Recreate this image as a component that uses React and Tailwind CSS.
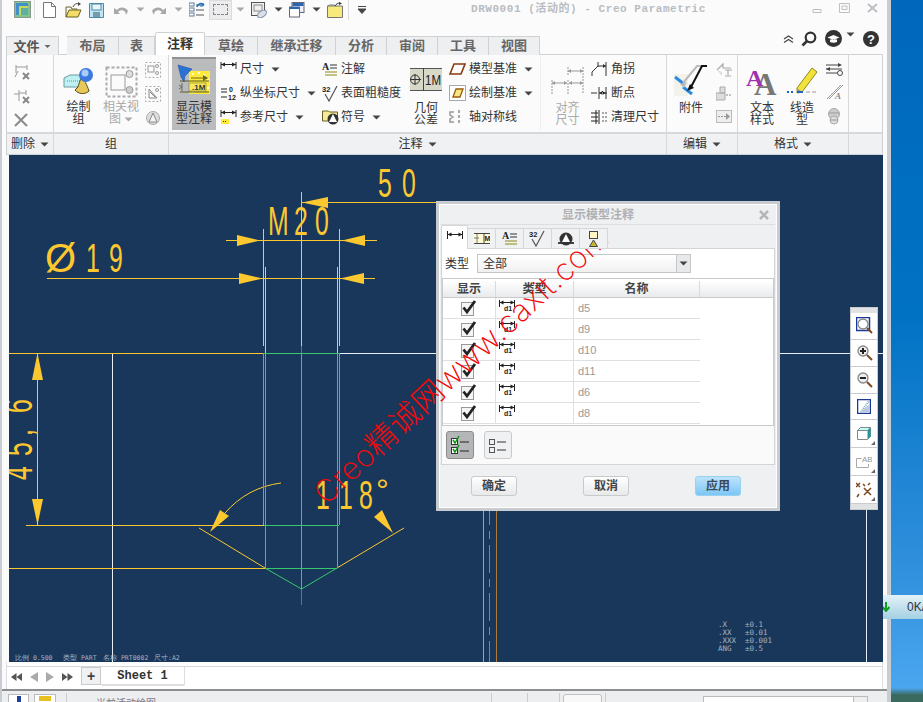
import React from "react";

const Caret = ({ c = "#444", cls = "ml-[7px]" }) => (
  <svg width="9" height="5" viewBox="0 0 9 5" className={cls + " shrink-0"}><path d="M0.5 0.5h8L4.5 4.5z" fill={c} /></svg>
);

const S = ({ w = 16, h = 16, vb, children, cls = "" }) => (
  <svg width={w} height={h} viewBox={vb || `0 0 ${w} ${h}`} className={"shrink-0 " + cls} fill="none">{children}</svg>
);

/* quick access */
const AppIco = () => (<S w={17} h={17}><rect x=".5" y=".5" width="16" height="16" fill="#7fc48a" stroke="#8a9a90" /><rect x="2" y="2" width="12" height="12" fill="#3f8fc8" /><rect x="5" y="5" width="9" height="9" fill="#c7d85a" /><rect x="7" y="7" width="7" height="7" fill="#5fb0a0" /></S>);
const NewIco = () => (<S w={13} h={16}><path d="M.5.5h8l4 4v11H.5z" fill="#fff" stroke="#777" /><path d="M8.5.5v4h4" stroke="#777" /></S>);
const OpenIco = () => (<S w={17} h={16}><path d="M1 5V15h12l3-7H4l-3 7" fill="#f2dc6a" stroke="#6b6020" /><path d="M1 5h5l1 2h5v1" stroke="#6b6020" /><path d="M8 5c1-3 4-4 6-3" stroke="#444" /><path d="M13 0l3 2-3 2z" fill="#444" /></S>);
const SaveIco = () => (<S w={15} h={16}><path d="M.5 1.5h14v14H.5z" fill="#bfe4f4" stroke="#4a8aa8" /><rect x="3" y="2" width="9" height="6" fill="#eaf6fb" stroke="#4a8aa8" /><rect x="4" y="10" width="7" height="5" fill="#7a9aaa" /></S>);
const Undo = ({ flip }) => (<S w={16} h={12} cls={flip ? "-scale-x-100" : ""}><path d="M4 6c3-4 9-3 11 1l-2 4c0-5-5-6-8-3l2 2H1V4z" fill="#a8a8a8" /></S>);
const RegenIco = () => (<S w={16} h={16}><rect x="0" y="1" width="5" height="3" fill="#fff" stroke="#5a7a9a" /><rect x="0" y="6" width="5" height="3" fill="#fff" stroke="#5a7a9a" /><rect x="0" y="11" width="5" height="3" fill="#fff" stroke="#5a7a9a" /><path d="M7 3h8M7 8h8M7 13h8" stroke="#555" /><path d="M8 5a4 4 0 0 1 7-2" stroke="#1a6fc0" strokeWidth="1.6" /><path d="M14 1v3h-3" stroke="#1a6fc0" /></S>);
const ViewIco = () => (<S w={16} h={16}><rect x=".5" y=".5" width="13" height="13" fill="#f0f0f0" stroke="#555" /><rect x="3" y="3" width="8" height="6" stroke="#888" /><ellipse cx="11" cy="12" rx="5" ry="3" fill="#d8e0ea" stroke="#8090a8" transform="rotate(-35 11 12)" /></S>);
const WinIco = () => (<S w={16} h={16}><rect x="3" y=".5" width="12" height="10" fill="#eef" stroke="#667" /><rect x=".5" y="5" width="10" height="10" fill="#fff" stroke="#667" /><rect x="3.5" y="1" width="11" height="3" fill="#2a66b0" /><rect x="1" y="5" width="9" height="2" fill="#2a66b0" /></S>);
const FolderIco = () => (<S w={16} h={16}><path d="M.5 4h15v11.5H.5z" fill="#f6ea7a" stroke="#777" /><path d="M.5 4l2-1h5l1 1" stroke="#777" /><path d="M8 4c1-2 3-3 5-3" stroke="#333" /><path d="M12 0l3 1.500-3 1.500z" fill="#333" /></S>);

/* ribbon small icons */
const Gray = "#9a9a9a";
const DelA = () => (<S w={17} h={17}><path d="M2 1v8M13 1v5M2 3h11" stroke={Gray} /><path d="M1 13l3-6" stroke={Gray} /><path d="M9 9l6 6M15 9l-6 6" stroke="#888" strokeWidth="2" /></S>);
const DelB = () => (<S w={17} h={17}><path d="M0 6h5M5 2v11M12 2v5M5 5h7" stroke={Gray} /><path d="M9 9l6 6M15 9l-6 6" stroke="#888" strokeWidth="2" /></S>);
const DelC = () => (<S w={14} h={14}><path d="M1 1l12 12M13 1L1 13" stroke="#8a8a8a" strokeWidth="2" /></S>);
const DrawGroup = () => (
  <S w={32} h={30}>
    <path d="M1 11l6-3h12v12H7l-6 0z" fill="#bff0f4" stroke="#6a9aa0" />
    <path d="M4 14h14" stroke="#2aa" strokeDasharray="1 1" />
    <path d="M15 20c2-7 3-9 4-10 2 2 5 8 7 14-4 4-11 3-14-1z" fill="#e8c85a" stroke="#5a4a10" />
    <circle cx="23" cy="8" r="7" fill="#3a7ae0" />
    <circle cx="22" cy="6" r="3.500" fill="#a8ccf8" />
  </S>
);
const DashBox = () => (
  <S w={33} h={32}>
    <rect x="1.500" y="1.500" width="30" height="29" stroke="#aaa" strokeWidth="2" strokeDasharray="3 2" />
    <rect x="6" y="9" width="14" height="15" stroke={Gray} />
    <circle cx="24.500" cy="8" r="3.500" stroke={Gray} fill="#ddd" />
    <circle cx="24.500" cy="24" r="3.500" stroke={Gray} fill="#ccc" />
  </S>
);
const MiniA = () => (<S w={16} h={16}><rect x=".5" y=".5" width="15" height="15" stroke="#aaa" strokeDasharray="2 2" /><rect x="3" y="4" width="6" height="6" stroke={Gray} /><circle cx="12" cy="4" r="1.500" stroke={Gray} /><circle cx="12" cy="11" r="1.500" stroke={Gray} /></S>);
const MiniB = () => (<S w={16} h={16}><rect x=".5" y=".5" width="15" height="15" stroke="#aaa" strokeDasharray="2 2" /><path d="M4 3v9h8zM5 6l5 5" stroke="#888" /><circle cx="12" cy="4" r="1.500" stroke={Gray} /></S>);
const MiniC = () => (<S w={16} h={16}><circle cx="8" cy="8" r="6.500" fill="#ddd" stroke="#aaa" /><path d="M8 3l4 9H4z" fill="#f4f4f4" stroke="#888" /></S>);

const ShowIco = () => (
  <S w={34} h={32}>
    <rect x="12" y="7" width="21" height="23" fill="#ffe93a" />
    <path d="M15 10h2M21 9h2M26 11h2M30 16h2M30 24h2M15 28h2M24 27h2" stroke="#fff" strokeWidth="1.500" />
    <path d="M3 17h29M3 28h29" stroke="#5a5a20" />
    <path d="M14 14h16" stroke="#6a6a20" /><path d="M31 14l-5-3v6z" fill="#6a6a20" />
    <path d="M1 1l14 4-7 7-1 6-3-5z" fill="#2a72d8" stroke="#1a4a90" strokeWidth=".5" />
    <rect x="12" y="19" width="17" height="8" fill="#f6e860" stroke="#6a6a20" strokeWidth=".5" />
    <text x="15" y="26" fontSize="8" fontWeight="700" fill="#333" fontFamily="Liberation Sans">.1M</text>
    <path d="M5 19v8M2 21l3 2-3 2" stroke="#666" />
  </S>
);
const DimIco = ({ extra }) => (
  <S w={17} h={16}>
    <path d="M1 1v7M16 1v7" stroke="#222" />
    <path d="M1 3.500h15" stroke="#222" />
    <path d="M1 3.500l4-2v4zM16 3.500l-4-2v4z" fill="#222" />
    {extra && <><rect x="1" y="10" width="8" height="5" fill="#ffe93a" /><path d="M3 12.500h4" stroke="#333" strokeDasharray="1 1" /></>}
  </S>
);
const OrdIco = () => (
  <S w={17} h={14}>
    <path d="M1 3h6M1 6h6" stroke="#222" />
    <text x="9" y="6" fontSize="7" fontWeight="700" fill="#222" fontFamily="Liberation Sans">0</text>
    <text x="8" y="14" fontSize="7" fontWeight="700" fill="#222" fontFamily="Liberation Sans">12</text>
    <path d="M1 11h6" stroke="#222" />
  </S>
);
const NoteIco = () => (
  <S w={16} h={15}>
    <text x="0" y="8" fontSize="10" fontWeight="700" fill="#222" fontFamily="Liberation Serif">A</text>
    <path d="M8 3h7M8 6h7" stroke="#333" /><path d="M3 10h12M3 13h12" stroke="#8a8a10" />
  </S>
);
const RoughIco = () => (
  <S w={17} h={17}>
    <text x="0" y="7" fontSize="7.500" fontWeight="700" fill="#222" fontFamily="Liberation Sans">32</text>
    <path d="M3 9l4 7L15 1" stroke="#555" strokeWidth="1.200" />
  </S>
);
const SymIco = () => (
  <S w={19} h={16}>
    <path d="M.5 2h6l1 1h8v9H.5z" fill="#f5ec9a" stroke="#6a6020" />
    <circle cx="11" cy="10" r="5.500" fill="#333" />
    <path d="M11 5l4 8H7z" fill="#fff" />
  </S>
);
const GeoIco = () => (
  <svg width="32" height="23" viewBox="0 0 32 23" className="shrink-0">
    <rect width="32" height="23" fill="#d8d8c8" />
    <path d="M0 .5h32M0 22.500h32" stroke="#555" />
    <path d="M13.500 0v23" stroke="#444" />
    <circle cx="5" cy="11.500" r="4.500" fill="none" stroke="#333" />
    <path d="M0 11.500h11M5 6v11" stroke="#333" />
    <text x="15" y="17" fontSize="15" fill="#222" textLength="16" lengthAdjust="spacingAndGlyphs" fontFamily="Liberation Sans">1M</text>
  </svg>
);
const DatumA = () => (<S w={17} h={12}><path d="M1 11L5 1h11l-4 10z" stroke="#8a3a10" strokeWidth="1.600" /></S>);
const DatumB = () => (<S w={17} h={16}><rect x=".5" y=".5" width="16" height="15" fill="#fff" stroke="#aaa" /><path d="M4 12L7 4h7l-3 8z" fill="#f6e880" stroke="#9a5a10" strokeWidth="1.300" /></S>);
const AxisIco = () => (<S w={17} h={17}><path d="M5 3H1v3l3 2-3 2v3h4" stroke="#999" strokeWidth="1.500" /><path d="M10 1v15" stroke="#555" strokeDasharray="3 2" /></S>);
const AlignIco = () => (
  <S w={34} h={28}>
    <path d="M17 1v8M32 1v26M1 14v14M17 14v14" stroke="#999" strokeDasharray="2 1" />
    <path d="M17 5h15M1 17h15M18 17h14" stroke={Gray} />
    <path d="M17 5l3-2v4zM32 5l-3-2v4zM1 17l3-2v4zM16 17l-3-2v4zM18 17l3-2v4zM32 17l-3-2v4z" fill={Gray} />
  </S>
);
const JogIco = () => (<S w={17} h={16}><path d="M15 1v14M15 5H7L1 11v4M7 1v5" stroke="#333" /><path d="M15 5l-3-2v4z" fill="#333" /></S>);
const BreakIco = () => (<S w={17} h={14}><path d="M0 7h6M8 7h8M8 1v12M15 1v12" stroke="#333" /><path d="M8 7l4-2v4zM15 7l-4-2v4z" fill="#222" /></S>);
const CleanIco = () => (<S w={17} h={14}><path d="M0 3h7M0 7h7M0 11h7M5 0v14M8 0v14" stroke="#222" /><path d="M11 3h6M11 7h6M11 11h6" stroke="#555" strokeDasharray="2 1" /></S>);
const AttachIco = () => (
  <S w={34} h={32}>
    <rect x="0" y="9" width="14" height="22" fill="#f2f2ea" />
    <path d="M1 12l9 7M9 22l9 7" stroke="#2a8ae0" strokeWidth="3" />
    <path d="M32 1H23L9 18" stroke="#bbb" strokeWidth="2" /><path d="M6 19l7-2-3 6z" fill="#bbb" />
    <path d="M33 1h-5L17 22" stroke="#111" strokeWidth="2" /><path d="M13 26l7-3-4-4z" fill="#111" />
  </S>
);
const EditA = () => (<S w={16} h={15}><path d="M1 8l6-6v4h8M9 8h7M12 8v5M9 14h6" stroke="#aaa" strokeWidth="1.200" /><path d="M1 8l5 6V10z" fill="#ddd" /></S>);
const EditB = () => (<S w={16} h={15}><path d="M4 1h5v6h-5zM0 7h9v7H0z" fill="#ddd" stroke="#aaa" /><path d="M10 9h6" stroke="#888" strokeDasharray="2 1" /></S>);
const EditC = () => (<S w={16} h={13}><rect x=".5" y=".5" width="15" height="12" fill="#eee" stroke="#bbb" /><path d="M2 6.500h8" stroke="#999" strokeDasharray="2 1" /><path d="M10 3l4 3.500-4 3.500z" fill="#999" /></S>);
const TextStyle = () => (
  <svg width="32" height="30" viewBox="0 0 32 30" className="shrink-0">
    <text x="8" y="29" fontSize="31" fontWeight="700" fill="#777" fontFamily="Liberation Serif">A</text>
    <text x="0" y="20" fontSize="24" fontWeight="700" fill="#a030b0" fontFamily="Liberation Serif">A</text>
  </svg>
);
const LineStyle = () => (
  <S w={32} h={30}>
    <path d="M11 22L26 2l5 4-15 20-5 1z" fill="#f2e23a" stroke="#8a8a20" />
    <path d="M11 22l5 4-5 1z" fill="#999" />
    <path d="M1 26h2M5 26h2" stroke="#2060c8" strokeWidth="2" /><path d="M11 26h6" stroke="#2060c8" strokeWidth="2" /><path d="M20 26h11" stroke="#bbb" strokeWidth="1.500" strokeDasharray="4 2" />
  </S>
);
const FormA = () => (<S w={17} h={14}><path d="M0 3h14M0 7h16M0 11h11" stroke="#444" /><path d="M16 3l-4-2v4zM0 7l4-2v4z" fill="#444" /><circle cx="14" cy="11" r="2.500" stroke="#444" /></S>);
const FormB = () => (<S w={17} h={16}><path d="M1 15L15 1M3 15L17 1" stroke="#999" /><text x="9" y="15" fontSize="9" fontWeight="700" fontStyle="italic" fill="#888" fontFamily="Liberation Serif">A</text></S>);
const FormC = () => (<S w={16} h={17}><circle cx="8" cy="6" r="5.500" fill="#ccc" stroke="#aaa" /><circle cx="8" cy="12" r="4" fill="#ddd" stroke="#aaa" /><path d="M3 5h10M4 12h8" stroke="#999" /></S>);

const Big = ({ w, icon, text, gray, iconH = 40, cls = "" }) => (
  <div style={{ width: w }} className={"flex flex-col items-center " + cls}>
    <div style={{ height: iconH }} className="flex items-center justify-center w-full">{icon}</div>
    <div className={"text-[12px] leading-[12px] text-center whitespace-nowrap " + (gray ? "text-[#aaa]" : "text-[#333]")}>{text}</div>
  </div>
);

const Row = ({ icon, label, caret, gray, iw = "w-[20px]" }) => (
  <div className="flex items-center h-[24px]">
    <span className={iw + " flex items-center shrink-0"}>{icon}</span>
    <span className={"text-[12px] whitespace-nowrap " + (gray ? "text-[#999]" : "text-[#333]")}>{label}</span>
    {caret && <Caret c="#444" />}
  </div>
);

const Group = ({ w, label, caret, children, cls = "" }) => (
  <div style={{ width: w }} className="flex flex-col border-r border-[#d6d8da] shrink-0">
    <div className={"h-[77px] flex items-start " + cls}>{children}</div>
    <div className="h-[22px] border-t-2 border-[#d6d8da] bg-[#f0f1f3] flex items-center justify-center text-[12px] text-[#333]">
      {label}{caret && <Caret c="#444" cls="ml-[5px]" />}
    </div>
  </div>
);

const tabs = [["布局", 52], ["表", 36], ["注释", 50, true], ["草绘", 53], ["继承迁移", 78], ["分析", 51], ["审阅", 51], ["工具", 51], ["视图", 51]];

const DimD1 = () => (
  <svg width="16" height="12" viewBox="0 0 16 12" className="shrink-0">
    <path d="M.5 0v7M15.500 0v7M.5 2.500h15" stroke="#222" fill="none" />
    <path d="M.5 2.500l4-2v4zM15.500 2.500l-4-2v4z" fill="#222" />
    <text x="5" y="10.500" fontSize="7" fontWeight="700" fill="#222" fontFamily="Liberation Sans">d1</text>
  </svg>
);
const Check = () => (
  <svg width="16" height="16" viewBox="0 0 16 16" className="shrink-0">
    <rect x=".5" y="2.500" width="12" height="13" fill="#f5f5f5" stroke="#999" />
    <path d="M2.500 7.500l3.500 4.500 8-11" fill="none" stroke="#222" strokeWidth="2.800" />
  </svg>
);

const rows = ["d5", "d9", "d10", "d11", "d6", "d8"];

const Dialog = () => (
  <div className="absolute left-[427px] top-[46px] w-[344px] h-[310px] border-[3px] border-[#c8ccd0] bg-[#eff0f2] flex flex-col">
    <div className="border border-white flex-1 flex flex-col min-h-0">
      <div className="h-[20px] relative flex items-center justify-center pr-[20px] text-[12px] font-bold text-[#aeb0b2] border-b border-[#dcdee0] mx-px">
        显示模型注释
        <svg width="10" height="10" viewBox="0 0 10 10" className="absolute right-[6px] top-[5px]"><path d="M1 1l8 8M9 1l-8 8" stroke="#b4b6b8" strokeWidth="2.500" /></svg>
      </div>
      <div className="h-[24px] flex items-end pl-[1px] relative z-10 -mb-px">
        <div className="w-[27px] h-[24px] bg-white border border-b-0 border-[#d4d6d8] rounded-t-[2px] flex justify-center pt-[5px]"><S w={16} h={8}><path d="M.5 0v8M15.500 0v8M.5 3.500h15" stroke="#222" /><path d="M.5 3.500l4-2v4zM15.500 3.500l-4-2v4z" fill="#222" /></S></div>
        {[0, 1, 2, 3, 4].map((i) => (
          <div key={i} className="w-[28px] h-[21px] bg-[#f0f1f3] border-r border-t border-b border-[#d4d6d8] flex items-center justify-center">
            {i === 0 && <S w={16} h={11}><rect x="0" y="1" width="16" height="9" fill="#fffbd8" /><path d="M0 .5h16M0 10.500h16M10 1v9" stroke="#444" /><path d="M3 1v9M0 5h5" stroke="#777" /><text x="10.500" y="8" fontSize="7" fontWeight="700" fill="#222" fontFamily="Liberation Sans">M</text></S>}
            {i === 1 && <NoteIco />}
            {i === 2 && <RoughIco />}
            {i === 3 && <S w={16} h={16}><path d="M0 12h16" stroke="#444" strokeWidth="2" /><circle cx="8" cy="8" r="6.500" fill="#333" /><path d="M8 3l4 8H4z" fill="#fff" /></S>}
            {i === 4 && <S w={9} h={16}><rect x=".5" y=".5" width="8" height="7" fill="#fff7c0" stroke="#444" /><path d="M4.500 9l4 6.500h-8z" fill="#c8b830" stroke="#444" /></S>}
          </div>
        ))}
      </div>
      <div className="mx-px bg-white border border-[#d2d4d6] h-[217px] flex flex-col">
        <div className="h-[29px] flex items-center pl-[3px] gap-[4px] shrink-0">
          <span className="text-[12px] text-[#333] w-[28px]">类型</span>
          <div className="w-[214px] h-[19px] border border-[#c4c6c8] bg-gradient-to-b from-white to-[#f0f0f0] flex items-center justify-between">
            <span className="text-[12px] text-[#333] pl-[5px]">全部</span>
            <div className="w-[14px] h-full border-l border-[#c4c6c8] bg-[#e8e9ea] flex items-center justify-center"><Caret c="#444" cls="" /></div>
          </div>
        </div>
        <div className="h-[148px] border border-[#c8cacc] pt-[2px] flex flex-col shrink-0">
          <div className="h-[17px] flex text-[12px] font-bold text-[#444] bg-gradient-to-b from-white to-[#e9eaec] border-b border-[#c8cacc] shrink-0 leading-[16px]">
            <div className="w-[53px] text-center border-r border-[#d8dadc]">显示</div>
            <div className="w-[78px] text-center border-r border-[#d8dadc]">类型</div>
            <div className="w-[126px] text-center border-r border-[#d8dadc]">名称</div>
            <div className="flex-1" />
          </div>
          {rows.map((r) => (
            <div key={r} className="h-[21px] w-[257px] flex border-b border-[#dddfe0] shrink-0">
              <div className="w-[53px] flex justify-center items-center border-r border-[#dddfe0]"><Check /></div>
              <div className="w-[78px] pl-[3px] pt-[2px] border-r border-[#dddfe0]"><DimD1 /></div>
              <div className="pl-[4px] text-[11px] leading-[20px] text-[#999]">{r}</div>
            </div>
          ))}
        </div>
        <div className="flex-1 bg-[#fafafa] flex items-center pl-[4px] gap-[10px]">
          <div className="w-[28px] h-[28px] rounded-[3px] bg-[#b4b6b8] border border-[#8a8c8e] flex items-center justify-center">
            <S w={18} h={20}><rect x=".5" y="3.500" width="6" height="6" fill="#fff" stroke="#333" /><rect x=".5" y="12.500" width="6" height="6" fill="#fff" stroke="#333" /><path d="M2 5l2 3 4-7M2 14l2 3 4-7" stroke="#0a9a10" strokeWidth="1.500" /><path d="M9 7h9M9 16h9" stroke="#222" /></S>
          </div>
          <div className="w-[28px] h-[28px] rounded-[3px] bg-[#f0f1f2] border border-[#c8cacc] flex items-center justify-center">
            <S w={18} h={15}><rect x=".5" y="1.500" width="5" height="5" stroke="#555" /><rect x=".5" y="9.500" width="5" height="5" stroke="#555" /><path d="M8 4h9M8 12h9" stroke="#333" /></S>
          </div>
        </div>
      </div>
      <div className="flex-1 flex items-center pl-[31px] gap-[66px]">
        <button className="w-[46px] h-[20px] rounded-[3px] border border-[#c8cacc] bg-gradient-to-b from-white to-[#e8e9ea] text-[12px] font-bold text-[#444]">确定</button>
        <button className="w-[46px] h-[20px] rounded-[3px] border border-[#c8cacc] bg-gradient-to-b from-white to-[#e8e9ea] text-[12px] font-bold text-[#444]">取消</button>
        <button className="w-[46px] h-[20px] rounded-[3px] border border-[#9ad0f0] bg-gradient-to-b from-[#bce4fb] to-[#7cc6f6] text-[12px] font-bold text-[#3a4a5a]">应用</button>
      </div>
    </div>
  </div>
);

const Mag = ({ sign, box }) => (
  <S w={17} h={17}>
    {box && <rect x=".5" y=".5" width="13" height="13" fill="#fff" stroke="#1a3a9a" strokeWidth="1.500" />}
    <circle cx="7" cy="7" r="5" fill={sign ? "#eee" : "none"} stroke="#888" strokeWidth="1.300" />
    {sign === "+" && <path d="M4 7h6M7 4v6" stroke="#222" strokeWidth="2" />}
    {sign === "-" && <path d="M4 7h6" stroke="#222" strokeWidth="2" />}
    <path d="M11 11l5 5" stroke="#7a4a20" strokeWidth="2" />
  </S>
);
const toolbarIcons = [
  <Mag box />, <Mag sign="+" />, <Mag sign="-" />,
  <S w={14} h={15}><rect x=".5" y=".5" width="13" height="14" fill="#fff" stroke="#1a3a9a" strokeWidth="1.500" /><path d="M4 13l8-11" stroke="#7ab" strokeWidth="2" strokeDasharray="1 1" /><path d="M3 13L13 5v8z" fill="#bcc8e0" /></S>,
  <S w={14} h={13}><path d="M.5 3.500l3-3h10v9l-3 3H.5z" fill="#fff" stroke="#888" /><path d="M10.500 3.500l3-3v9l-3 3z" fill="#1a9a9a" /><path d="M.5 3.500l3-3h10l-3 3z" fill="#bff" stroke="#888" /></S>,
  <svg width="16" height="13" viewBox="0 0 16 13" className="shrink-0"><path d="M.5 3.500h5M.5 3.500v9h12V9" stroke="#aaa" fill="none" /><text x="6" y="7" fontSize="8" fill="#999" fontFamily="Liberation Sans">AB</text></svg>,
  <S w={16} h={16}><path d="M0 1l4 4M4 1L0 5M7 2l2 2M3 12l-2 3M8 6l7 7M15 6l-7 7M12 3l2-2M1 15l1-1" stroke="#7a4a20" strokeWidth="1.500" /></S>,
];
const Toolbar = () => (
  <div className="absolute left-[841px] top-[152px] w-[28px] h-[203px] border border-[#c8ccd0] bg-[#e0e2e4] flex flex-col py-[5px]">
    {toolbarIcons.map((ic, i) => (
      <div key={i} className={"bg-white border-b border-[#c8ccd0] flex items-center justify-center relative " + (i > 3 ? "h-[28px]" : "h-[27px]")}>
        {ic}
        {i > 3 && <svg width="4" height="4" viewBox="0 0 4 4" className="absolute right-[2px] bottom-[2px]"><path d="M4 0v4H0z" fill="#666" /></svg>}
      </div>
    ))}
  </div>
);

const Y = "#fdc82f";
const G = "#37c76e";
const W = "#e8eef8";
const Arr = ({ p }) => <polygon points={p} fill={Y} />;
const T = ({ x, y, pos, sx = 0.62, size = 40, rot = 0, children }) => (
  <text transform={`translate(${x} ${y}) rotate(${rot}) scale(${sx} 1)`} x={pos.map((a) => a / sx).join(" ")} y="0" fontSize={size} fill={Y} fontFamily="Liberation Sans">{children}</text>
);

const Drawing = () => (
  <svg viewBox="9 155 874 507" width="874" height="507" className="absolute inset-0" shapeRendering="crispEdges">
    {/* white construction lines */}
    <path d="M339 353.500H883M112.500 353V662M866.500 353V662" stroke={W} fill="none" />
    <path d="M483.500 353V662" stroke="#9aa4b0" fill="none" />
    <path d="M489.500 353V662" stroke="#a87a4a" strokeDasharray="28 6 8 6" fill="none" />
    <path d="M496.500 353V662" stroke="#b07a3a" fill="none" />
    {/* yellow */}
    <g stroke={Y} fill="none" strokeWidth="1">
      <path d="M9 353.500H264M26 525.500H264M9 568.500H265" />
      <path d="M226 240.500H377M47 278.500H375M301 202.500H440" />
      <path d="M263.500 229V346M339.500 229V346M265.500 267V353M337.500 267V353M301.500 192V346" />
      <path d="M37.500 353V525" />
    </g>
    <g stroke={Y} fill="none" shapeRendering="auto">
      <path d="M199 528L265 568M337 568L404 528" />
      <path d="M281 483C258 486 240 496 225 513" />
    </g>
    <path d="M301.500 346V353M301.500 589V605" stroke="#8a6a50" fill="none" />
    {/* green */}
    <g stroke={G} fill="none">
      <path d="M264 353.500H339M264 525.500H339M265 568.500H337" />
      <path d="M263.500 353V525M339.500 353V525M265.500 353V568M337.500 353V568M301.500 353V589" />
      <path d="M265 568L301.500 589L337 568" shapeRendering="auto" />
    </g>
    <g shapeRendering="auto">
      <Arr p="237,235 260,240.500 237,246" />
      <Arr p="365,235 342,240.500 365,246" />
      <Arr p="239,273 263,278.500 239,284" />
      <Arr p="364,273 340,278.500 364,284" />
      <Arr p="302,202.500 328,197 328,208" />
      <Arr p="37.500,353 32,380 43,380" />
      <Arr p="37.500,525 32,499 43,499" />
      <Arr p="210,532 220,510 229,516" />
      <Arr p="393,533 374,517 382,510" />
      <T x={378} y={197} pos={[0, 24]}>50</T>
      <T x={268} y={235} pos={[0, 26, 47]}>M20</T>
      <text x="45" y="272" fontSize="40" fill={Y} fontFamily="Liberation Sans">Ø</text>
      <T x={86} y={272} pos={[0, 23]}>19</T>
      <T x={32} y={480} rot={-90} pos={[0, 24, 44, 67]}>45,6</T>
      <T x={316} y={509} pos={[0, 23, 43]}>118</T>
      <text x="376" y="501" fontSize="32" fill={Y} fontFamily="Liberation Sans">°</text>
      <g fontSize="6.500" fill="#a9b3c0" fontFamily="DejaVu Sans Mono">
        <text x="15" y="660">比例 0.500</text>
        <text x="63" y="660">类型 PART</text>
        <text x="103" y="660">名称 PRT0002</text>
        <text x="154" y="660">尺寸:A2</text>
      </g>
      <g fontSize="7.500" fill="#a9b3c0" fontFamily="DejaVu Sans Mono">
        <text x="718" y="627">.X</text><text x="745" y="627">±0.1</text>
        <text x="718" y="635">.XX</text><text x="745" y="635">±0.01</text>
        <text x="718" y="643">.XXX</text><text x="745" y="643">±0.001</text>
        <text x="718" y="651">ANG</text><text x="745" y="651">±0.5</text>
      </g>
    </g>
  </svg>
);

export default function App() {
  return (
    <div className="relative w-[923px] h-[702px] overflow-hidden flex font-['Liberation_Sans','Noto_Sans_CJK_SC',sans-serif] bg-[linear-gradient(180deg,#0068bc_0%,#0072c4_45%,#2f8fdc_80%,#4aa6ef_98%,#3a6a5e_99%)]">
      <div className="w-[891px] h-full shrink-0 flex flex-col bg-[#fbfbfb] border-l-2 border-r-4 border-[#c9cdd2]">
        {/* quick access + title */}
        <div className="h-[31px] shrink-0 relative flex items-start">
          <div className="flex items-center h-[19px] pl-[12px]">
            <AppIco />
            <div className="w-px h-[20px] bg-[#dcdcdc] ml-[3px]" />
            <span className="ml-[8px]"><NewIco /></span>
            <span className="ml-[9px]"><OpenIco /></span>
            <span className="ml-[7px]"><SaveIco /></span>
            <span className="ml-[9px]"><Undo /></span>
            <Caret c="#aaa" cls="ml-[7px]" />
            <span className="ml-[6px]"><Undo flip /></span>
            <Caret c="#aaa" cls="ml-[7px]" />
            <span className="ml-[6px]"><RegenIco /></span>
            <div className="ml-[4px] w-[23px] h-[20px] bg-[#ececee] border border-[#dcdcdc] flex items-center justify-center"><div className="w-[15px] h-[11px] border border-dashed border-[#888]" /></div>
            <Caret c="#aaa" cls="ml-[4px]" />
            <span className="ml-[6px]"><ViewIco /></span>
            <Caret c="#444" cls="ml-[7px]" />
            <span className="ml-[6px]"><WinIco /></span>
            <Caret c="#444" cls="ml-[7px]" />
            <span className="ml-[6px]"><FolderIco /></span>
            <div className="w-px h-[20px] bg-[#dcdcdc] ml-[5px]" />
            <svg width="10" height="8" viewBox="0 0 10 8" className="ml-[8px]"><path d="M1 .5h8M1 3h8L5 7.500z" stroke="#444" fill="#444" strokeWidth="1" /></svg>
          </div>
          <div className="absolute left-[469px] top-[2px] text-[11px] font-bold leading-[14px] tracking-[.55px] text-[#b9bdc2] font-['Liberation_Mono','Noto_Sans_CJK_SC',monospace] whitespace-nowrap">DRW0001 (活动的) - Creo Parametric</div>
          <div className="absolute right-[9px] top-[3px] flex items-center gap-[17px]">
            <svg width="10" height="10" viewBox="0 0 10 10"><path d="M1 6.500h8v3H1z" fill="none" stroke="#bcc0c4" /></svg>
            <svg width="11" height="10" viewBox="0 0 11 10"><path d="M.5.5h10v9H.5zM3 3h5v3.500H3z" fill="none" stroke="#bcc0c4" /></svg>
            <svg width="11" height="10" viewBox="0 0 11 10"><path d="M1 1l9 8M10 1L1 9" stroke="#bcc0c4" strokeWidth="2" /></svg>
          </div>
        </div>
        {/* tabs */}
        <div className="h-[24px] shrink-0 flex items-end pl-[4px] pr-[4px] relative z-10 -mb-px">
          <div className="w-[53px] h-[19px] mr-[8px] flex items-center justify-center bg-[#eeeff1] border border-b-0 border-[#cfd1d3] text-[13px] font-bold text-[#555] leading-none">文件<Caret c="#666" cls="ml-[3px] scale-75" /></div>
          {tabs.map(([t, w, act]) => (
            <div key={t} style={{ width: w }} className={act
              ? "h-[23px] flex items-center justify-center bg-white border border-b-0 border-[#cfd1d3] text-[13px] font-bold text-[#333] rounded-t-[2px]"
              : "h-[19px] flex items-center justify-center bg-[#eeeff1] border-t border-r border-[#cfd1d3] text-[13px] font-bold text-[#666] first:border-l"}>{t}</div>
          ))}
          <div className="absolute right-[8px] top-[-1px] flex items-center">
            <svg width="11" height="8" viewBox="0 0 11 8"><path d="M1 4l4.500-3L10 4M1 7.500l4.500-3L10 7.500" stroke="#444" fill="none" strokeWidth="1.200" /></svg>
            <svg width="16" height="16" viewBox="0 0 16 16" className="ml-[7px]"><circle cx="9.500" cy="6.500" r="4.800" fill="none" stroke="#333" strokeWidth="2.200" /><path d="M6 10l-4.500 4.500" stroke="#333" strokeWidth="2.600" /></svg>
            <svg width="17" height="17" viewBox="0 0 17 17" className="ml-[8px]"><circle cx="8.500" cy="8.500" r="8.500" fill="#333" /><path d="M2.500 7.500l6-2.500 6 2.500-6 2.500zM5 9.500v2.500c2 1 5 1 7 0V9.500" fill="#fff" /></svg>
            <Caret c="#444" cls="ml-[4px] -mt-[8px]" />
            <svg width="16" height="16" viewBox="0 0 16 16" className="ml-[8px]"><circle cx="8" cy="8" r="8" fill="#333" /><text x="8" y="13" textAnchor="middle" fontSize="13" fontWeight="700" fill="#fff" fontFamily="Liberation Sans">?</text></svg>
          </div>
        </div>
        {/* ribbon */}
        <div className="h-[101px] shrink-0 ml-[4px] mr-[4px] bg-[#fbfbfb] border border-[#cfd1d3] flex">
          <Group w={47} label="删除" caret cls="flex-col items-center pl-[7px] pt-[5px]">
            <div className="h-[25px] flex items-center"><DelA /></div>
            <div className="h-[25px] flex items-center"><DelB /></div>
            <div className="h-[25px] flex items-center"><DelC /></div>
          </Group>
          <Group w={115} label="组" cls="pt-[7px] pl-[7px]">
            <Big w={35} iconH={39} icon={<DrawGroup />} text={<>绘制<br />组</>} />
            <Big w={34} iconH={39} cls="ml-[8px]" gray icon={<DashBox />} text={<>相关视<br /><span className="inline-flex items-center">图<Caret c="#aaa" cls="ml-[3px]" /></span></>} />
            <div className="ml-[7px] flex flex-col gap-[8px] pt-0">
              <MiniA /><MiniB /><MiniC />
            </div>
          </Group>
          <Group w={498} label="注释" caret cls="pl-[3px] pt-[2px]">
            <div className="w-[44px] h-[73px] bg-[#b9bbbd] border-t-2 border-[#8f9193] flex flex-col items-center">
              <div className="h-[42px] flex items-center"><ShowIco /></div>
              <div className="text-[12px] leading-[12px] text-center text-[#333]">显示模<br />型注释</div>
            </div>
            <div className="ml-[4px] w-[102px]">
              <Row icon={<DimIco />} label="尺寸" caret />
              <Row icon={<OrdIco />} label="纵坐标尺寸" caret />
              <Row icon={<DimIco extra />} label="参考尺寸" caret />
            </div>
            <div className="w-[88px]">
              <Row icon={<NoteIco />} label="注解" iw="w-[19px]" />
              <Row icon={<RoughIco />} label="表面粗糙度" iw="w-[19px]" />
              <Row icon={<SymIco />} label="符号" caret iw="w-[19px]" />
            </div>
            <Big w={32} iconH={45} icon={<GeoIco />} text={<>几何<br />公差</>} />
            <div className="ml-[7px] w-[92px] border-r border-[#eeeeee] h-[73px]">
              <Row icon={<DatumA />} label="模型基准" caret />
              <Row icon={<DatumB />} label="绘制基准" caret />
              <Row icon={<AxisIco />} label="轴对称线" />
            </div>
            <Big w={33} iconH={45} cls="ml-[10px]" gray icon={<AlignIco />} text={<>对齐<br />尺寸</>} />
            <div className="ml-[7px]">
              <Row icon={<JogIco />} label="角拐" />
              <Row icon={<BreakIco />} label="断点" />
              <Row icon={<CleanIco />} label="清理尺寸" />
            </div>
          </Group>
          <Group w={71} label="编辑" caret cls="pt-[5px] pl-[7px]">
            <Big w={34} iconH={42} icon={<AttachIco />} text="附件" />
            <div className="ml-[8px] flex flex-col gap-[9px] pt-[2px]"><EditA /><EditB /><EditC /></div>
          </Group>
          <Group w={111} label="格式" caret cls="pt-[5px] pl-[8px]">
            <Big w={32} iconH={42} icon={<TextStyle />} text={<>文本<br />样式</>} />
            <Big w={32} iconH={42} cls="ml-[8px]" icon={<LineStyle />} text={<>线造<br />型</>} />
            <div className="ml-[8px] flex flex-col gap-[8px] pt-[2px]"><FormA /><FormB /><FormC /></div>
          </Group>
          <div className="flex-1 flex flex-col">
            <div className="h-[77px]" />
            <div className="h-[22px] border-t-2 border-[#d6d8da] bg-[#f0f1f3]" />
          </div>
        </div>
        {/* canvas */}
        <div className="relative h-[507px] shrink-0 ml-[7px] mr-[4px] bg-[#18375b] overflow-hidden">
          <Drawing />
          <Dialog />
          <Toolbar />
          <div className="absolute left-[255px] top-[189px] w-[405px] origin-center -rotate-[43deg] text-[31px] leading-none tracking-[.5px] text-[#f40808] font-extralight font-['Inter','Noto_Sans_CJK_SC',sans-serif] whitespace-nowrap">Creo精诚网www.caxit.com</div>
        </div>
        {/* sheet bar */}
        <div className="h-[27px] shrink-0 mr-[4px] ml-[4px] mt-0 bg-white border-x border-[#dcdedf]">
          <div className="h-[5px] border-b border-[#d4d6d8]" />
          <div className="h-[22px] flex items-start">
            <div className="flex items-center h-[20px] pl-[4px] gap-[8px]">
              <svg width="11" height="8" viewBox="0 0 11 8"><path d="M5.500 0v8L0 4zM11 0v8L5.500 4z" fill="#555" /></svg>
              <svg width="8" height="10" viewBox="0 0 8 10"><path d="M8 0v10L0 5z" fill="#aaa" /></svg>
              <svg width="8" height="10" viewBox="0 0 8 10"><path d="M0 0v10l8-5z" fill="#aaa" /></svg>
              <svg width="11" height="8" viewBox="0 0 11 8"><path d="M0 0v8l5.500-4zM5.500 0v8L11 4z" fill="#555" /></svg>
            </div>
            <div className="ml-[8px] w-[20px] h-[18px] bg-[#f0f1f2] border border-[#c8cacc] flex items-center justify-center text-[14px] font-bold text-[#444]">+</div>
            <div className="w-[84px] h-[19px] bg-white border-b-2 border-r border-[#dcdedf] rounded-b-[2px] flex items-center justify-center text-[12px] font-bold text-[#333] font-['Liberation_Mono',monospace]">Sheet 1</div>
          </div>
        </div>
        {/* status */}
        <div className="h-[13px] shrink-0 border-t-2 border-[#8c8e90] bg-[#eceef0] relative overflow-hidden">
          <div className="absolute left-[6px] top-[3px] w-[21px] h-[14px] bg-white border border-[#bbb]"><div className="w-[4px] h-[6px] mx-auto mt-px bg-[#2040a0]" /></div>
          <div className="absolute left-[32px] top-[3px] w-[22px] h-[14px] bg-white border border-[#bbb]"><div className="w-[12px] h-[5px] mx-auto mt-px bg-[#e8c020]" /></div>
          <div className="absolute left-[64px] top-[2px] w-px h-[12px] bg-[#ccc]" />
          <div className="absolute left-[88px] top-[7px] text-[10px] leading-[12px] text-[#778]">· 当前活动绘图</div>
          <div className="absolute left-[489px] top-[2px] w-px h-[12px] bg-[#ccc]" />
          <div className="absolute left-[525px] top-[2px] w-px h-[12px] bg-[#ccc]" />
          <div className="absolute left-[557px] top-[2px] w-px h-[12px] bg-[#ccc]" />
          <div className="absolute left-[561px] top-[3px] w-[39px] h-[14px] rounded-t-[3px] bg-[#f8f8f8] border border-[#c0c0c0]" />
          <div className="absolute left-[603px] top-[2px] w-px h-[12px] bg-[#ccc]" />
          <div className="absolute left-[701px] top-[5px] w-[165px] h-[14px] bg-white border border-[#bbb]"><div className="absolute right-0 top-0 w-[14px] h-full border-l border-[#bbb] bg-[#eee]" /></div>
        </div>
      </div>
      {/* speed notification */}
      <div className="absolute left-[883px] top-[595px] w-[40px] h-[24px] bg-gradient-to-b from-[#e4f2f8] to-[#a4d0e2] flex items-center overflow-hidden">
        <svg width="8" height="10" viewBox="0 0 8 10" className="shrink-0 ml-[-1px]"><path d="M4 0v8M0.500 5L4 9l3.500-4" stroke="#10a020" strokeWidth="2" fill="none" /></svg>
        <span className="ml-[17px] text-[12px] text-[#334] whitespace-nowrap">0K/s</span>
      </div>
    </div>
  );
}
